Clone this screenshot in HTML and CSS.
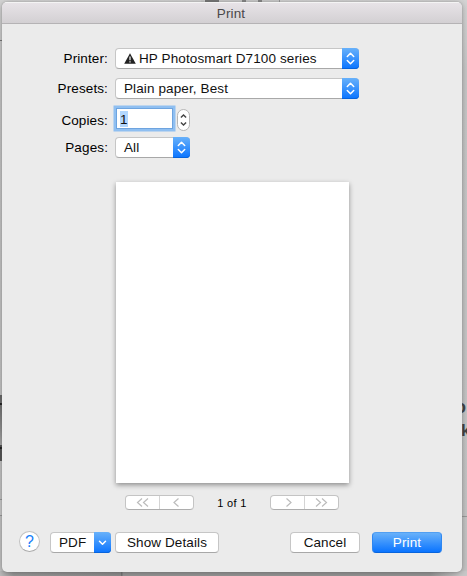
FILE: index.html
```html
<!DOCTYPE html>
<html lang="en">
<head>
<meta charset="utf-8">
<title>Print</title>
<link rel="stylesheet" href="styles.css">
</head>
<body>
<div class="backdrop">
  <i class="top-tab"></i><i class="top-mark"></i><i class="top-mark second"></i><i class="top-edge"></i>
  <i class="left-line"></i><i class="left-panel"></i><i class="left-dark"></i><i class="left-dark low"></i>
  <i class="left-box"></i><i class="bottom-shade"></i><i class="right-line"></i>
  <b class="right-text">o</b><b class="right-text second">k</b>
</div>
<main class="window">
  <header class="titlebar">Print</header>
  <form class="fields">
    <div class="row">
      <label>Printer:</label>
      <div class="select wide">
        <svg class="warn" width="12" height="11" viewBox="0 0 12 11"><path d="M6 .2 11.8 10.7H.2Z" fill="#222"/><path d="M6 3.5V7.2M6 8.2V9.5" stroke="#fff" stroke-width="1.2"/></svg>
        <span class="printer-name">HP Photosmart D7100 series</span>
        <span class="cap"><svg width="17" height="21" viewBox="0 0 17 21"><path d="M5.3 8.5 8.5 5.3 11.7 8.5M5.3 12.5 8.5 15.7 11.7 12.5"/></svg></span>
      </div>
    </div>
    <div class="row">
      <label>Presets:</label>
      <div class="select wide"><span>Plain paper, Best</span>
        <span class="cap"><svg width="17" height="21" viewBox="0 0 17 21"><path d="M5.3 8.5 8.5 5.3 11.7 8.5M5.3 12.5 8.5 15.7 11.7 12.5"/></svg></span>
      </div>
    </div>
    <div class="row copies">
      <label>Copies:</label>
      <div class="number"><span>1</span></div>
      <div class="stepper"><svg width="11" height="20" viewBox="0 0 11 20"><path d="M2.9 7.5 5.5 4.9 8.1 7.5M2.9 12.5 5.5 15.1 8.1 12.5"/></svg></div>
    </div>
    <div class="row pages">
      <label>Pages:</label>
      <div class="select"><span>All</span>
        <span class="cap"><svg width="17" height="21" viewBox="0 0 17 21"><path d="M5.3 8.5 8.5 5.3 11.7 8.5M5.3 12.5 8.5 15.7 11.7 12.5"/></svg></span>
      </div>
    </div>
  </form>
  <div class="preview"></div>
  <nav class="pager">
    <div class="segments">
      <span><svg width="33" height="13" viewBox="0 0 33 13"><path d="M16 2.5 11.5 6.5 16 10.5M22 2.5 17.500 6.5 22 10.5"/></svg></span>
      <span><svg width="33" height="13" viewBox="0 0 33 13"><path d="M18.500 2.500 14 6.500 18.500 10.500"/></svg></span>
    </div>
    <span class="count">1 of 1</span>
    <div class="segments">
      <span><svg width="33" height="13" viewBox="0 0 33 13"><path d="M15.500 2.500 20 6.500 15.500 10.500"/></svg></span>
      <span><svg width="33" height="13" viewBox="0 0 33 13"><path d="M11 2.500 15.500 6.500 11 10.500M17 2.500 21.500 6.500 17 10.500"/></svg></span>
    </div>
  </nav>
  <footer class="actions">
    <div class="help">?</div>
    <div class="select pdf"><span>PDF</span>
      <span class="cap"><svg width="17" height="21" viewBox="0 0 17 21"><path d="M5.500 9.200 8.500 12.200 11.500 9.200"/></svg></span>
    </div>
    <div class="button details">Show Details</div>
    <div class="button cancel">Cancel</div>
    <div class="button primary">Print</div>
  </footer>
</main>
</body>
</html>
```
FILE: styles.css
```css
* { box-sizing: border-box; }
body {
  margin: 0;
  width: 467px;
  height: 576px;
  overflow: hidden;
  background: #c8c8c8;
  font: 13.5px/21px "Liberation Sans", Arial, sans-serif;
  letter-spacing: .12px;
  color: #111;
}
svg { display: block; fill: none; }

/* What shows around the edges of the dialog */
.backdrop { position: absolute; inset: 0; overflow: hidden; background: linear-gradient(#d4d4d4, #c6c6c6 12%, #c4c4c4); }
.backdrop i { position: absolute; }
.top-tab { left: 201px; top: 0; width: 78px; height: 2px; background: linear-gradient(90deg, #ccc 3px, transparent 3px 4px, #777 4px 18px, #ccc 18px); }
.top-mark { left: 242px; top: 0; width: 4px; height: 2px; background: #888; }
.top-mark.second { left: 258px; }
.top-edge { left: 279px; top: 0; width: 1px; height: 2px; background: #999; }
.left-line { left: 0; top: 40px; width: 2px; height: 1px; background: #777; }
.left-panel { left: 0; top: 395px; width: 2px; height: 66px; background: linear-gradient(#666, #909090 50%, #aaa 75%, #555 76%); }
.left-dark { left: 0; top: 403px; width: 2px; height: 2px; background: #222; }
.left-dark.low { top: 447px; height: 2px; }
.left-box { left: 0; top: 499px; width: 2px; height: 17px; background: #ccc; border: solid #999; border-width: 1px 0; }
.bottom-shade { left: 0; bottom: 0; width: 467px; height: 5px; background: linear-gradient(90deg, #bbb, #999 14px, #8f8f8f 121px, #777 121px 122px, #989898 123px 430px, #c8c8c8 460px); }
.right-line { right: 0; top: 516px; width: 5px; height: 1px; background: #999; }
.right-text { position: absolute; left: 455px; top: 397px; font-size: 18px; color: #444; }
.right-text.second { left: 461px; top: 420px; font-size: 17px; }

.window {
  position: relative;
  display: flex;
  flex-direction: column;
  width: 460px;
  height: 570px;
  margin: 2px 0 0 2px;
  overflow: hidden;
  border-radius: 5px;
  background: #ebebeb;
  box-shadow: 0 0 1px #777, 0 1px 6px rgba(0, 0, 0, .3);
}
.titlebar {
  height: 22px;
  padding-right: 2px;
  border-top: 1px solid #f4f4f4;
  border-bottom: 1px solid #b5b3b5;
  background: linear-gradient(#e7e3e7, #d3d0d3);
  color: #4a484a;
  text-align: center;
}
.fields { display: flex; flex-direction: column; gap: 9px; margin-top: 24px; }
.row { display: flex; gap: 7px; height: 21px; }
.row label { width: 106px; text-align: right; color: #000; }
.copies { height: 25px; margin-top: -2px; align-items: center; }
.copies label { padding-top: 3px; }
.pages { margin-top: -3px; }
.select, .button {
  display: flex;
  position: relative;
  height: 21px;
  border: 1px solid #c6c6c6;
  border-bottom-color: #a8a8a8;
  border-radius: 4px;
  background: #fff;
  line-height: 19px;
}
.select { width: 75px; padding-left: 8px; }
.select.wide { width: 244px; }
.warn { margin: 4px 3px 0 0; }
.cap {
  width: 17px;
  height: 21px;
  margin: -1px -1px -1px auto;
  border-radius: 0 4px 4px 0;
  background: linear-gradient(#68b1fa, #0a74ff);
  box-shadow: inset 0 -1px #0864dc;
}
.cap path { stroke: #fff; stroke-width: 1.500; stroke-linecap: round; stroke-linejoin: round; }
.number {
  width: 57px;
  height: 21px;
  margin: -1px -3px 0 1px;
  padding: 2px 0 0 3px;
  border: 1px solid #6ea4df;
  background: #fff;
  box-shadow: 0 0 0 2.500px #8fbff1;
  line-height: 17px;
}
.number span { display: block; width: 8px; height: 16px; background: #b2d7fe; }
.stepper {
  width: 13px;
  height: 22px;
  margin-top: 2px;
  border: 1px solid #b5b5b5;
  border-radius: 6.500px;
  background: #fff;
}
.stepper path { stroke: #444; stroke-width: 1.400; }
.preview {
  width: 233px;
  height: 301px;
  margin: 24px 0 0 114px;
  background: #fff;
  box-shadow: 0 2px 5px rgba(0, 0, 0, .4);
}
.pager { display: flex; height: 15px; margin: 12px 0 0 123px; }
.segments {
  display: flex;
  width: 69px;
  border: 1px solid #c4c4c4;
  border-bottom-color: #adadad;
  border-radius: 4px;
  background: #fff;
}
.segments span + span { border-left: 1px solid #d4d4d4; }
.segments path { stroke: #bcbcbc; stroke-width: 1.200; }
.count { width: 76px; text-align: center; font-size: 11px; line-height: 16px; letter-spacing: .36px; color: #000; }
.actions { display: flex; margin: 22px 0 0 17px; }
.help {
  width: 21px;
  height: 21px;
  margin: -1px 10px 0 0;
  border: 1px solid #c1c1c1;
  border-bottom-color: #aaa;
  border-radius: 50%;
  background: #fff;
  color: #1680fa;
  font-size: 16px;
  line-height: 19px;
  text-align: center;
}
.select.pdf { width: 61px; margin-right: 4px; }
.button { justify-content: center; width: 70px; }
.details { width: 104px; margin-right: 71px; }
.cancel { margin-right: 12px; }
.primary { border-color: #519ff2 #2f87f0 #0864dc; background: linear-gradient(#68b1fa, #0a74ff); color: #fff; }
```
